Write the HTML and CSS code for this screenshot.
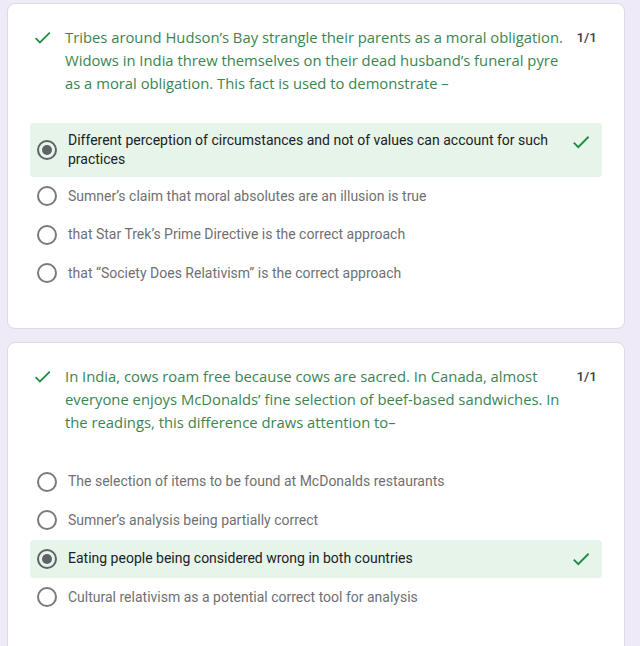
FILE: index.html
```html
<!DOCTYPE html>
<html>
<head>
<meta charset="utf-8">
<link rel="stylesheet" href="styles.css">
</head>
<body>
<div class="page">
  <section class="card card-first">
    <div class="question">
      <svg class="qcheck" viewBox="0 0 24 24"><path d="M9 16.17L4.83 12l-1.42 1.41L9 19 21 7l-1.41-1.41z"/></svg>
      <div class="qtext">Tribes around Hudson’s Bay strangle their parents as a moral obligation. Widows in India threw themselves on their dead husband’s funeral pyre as a moral obligation. This fact is used to demonstrate –</div>
      <div class="score">1/1</div>
    </div>
    <div class="options">
      <div class="option selected">
        <span class="radio checked"></span>
        <span class="otext">Different perception of circumstances and not of values can account for such practices</span>
        <svg class="ocheck" viewBox="0 0 24 24"><path d="M9 16.17L4.83 12l-1.42 1.41L9 19 21 7l-1.41-1.41z"/></svg>
      </div>
      <div class="option">
        <span class="radio"></span>
        <span class="otext">Sumner’s claim that moral absolutes are an illusion is true</span>
      </div>
      <div class="option">
        <span class="radio"></span>
        <span class="otext">that Star Trek’s Prime Directive is the correct approach</span>
      </div>
      <div class="option">
        <span class="radio"></span>
        <span class="otext">that “Society Does Relativism” is the correct approach</span>
      </div>
    </div>
  </section>
  <section class="card card-second">
    <div class="question">
      <svg class="qcheck" viewBox="0 0 24 24"><path d="M9 16.17L4.83 12l-1.42 1.41L9 19 21 7l-1.41-1.41z"/></svg>
      <div class="qtext">In India, cows roam free because cows are sacred. In Canada, almost everyone enjoys McDonalds’ fine selection of beef-based sandwiches. In the readings, this difference draws attention to–</div>
      <div class="score">1/1</div>
    </div>
    <div class="options">
      <div class="option">
        <span class="radio"></span>
        <span class="otext">The selection of items to be found at McDonalds restaurants</span>
      </div>
      <div class="option">
        <span class="radio"></span>
        <span class="otext">Sumner’s analysis being partially correct</span>
      </div>
      <div class="option selected">
        <span class="radio checked"></span>
        <span class="otext">Eating people being considered wrong in both countries</span>
        <svg class="ocheck" viewBox="0 0 24 24"><path d="M9 16.17L4.83 12l-1.42 1.41L9 19 21 7l-1.41-1.41z"/></svg>
      </div>
      <div class="option">
        <span class="radio"></span>
        <span class="otext">Cultural relativism as a potential correct tool for analysis</span>
      </div>
    </div>
  </section>
</div>
</body>
</html>
```

FILE: styles.css
```css
html, body {
  margin: 0;
  padding: 0;
  background: #eeeaf7;
  overflow: hidden;
}
.page {
  padding: 3px 15px 0 7px;
  display: flex;
  flex-direction: column;
  gap: 13px;
}
.card {
  background: #fff;
  border: 1px solid #dcdbe3;
  border-radius: 8px;
  padding: 0 22px;
}
.card-first {
  padding-top: 22px;
  padding-bottom: 35px;
}
.card-second {
  padding-top: 22px;
  padding-bottom: 60px;
}
.question {
  display: flex;
  align-items: flex-start;
  padding: 0 5px 0 2px;
}
.qcheck {
  width: 21px;
  height: 21px;
  fill: #1e8e3e;
  flex: none;
  margin: 1px 12px 0 0;
}
.qtext {
  flex: 1;
  font-family: "Open Sans", sans-serif;
  font-size: 14.8px;
  line-height: 23px;
  color: #3b8552;
}
.score {
  flex: none;
  font-family: Roboto, sans-serif;
  font-size: 13.5px;
  font-weight: 500;
  line-height: 23px;
  color: #3c4043;
  margin-left: 4px;
}
.options {
  margin-top: 28px;
  display: flex;
  flex-direction: column;
}
.card-second .options {
  margin-top: 29px;
}
.option {
  display: flex;
  align-items: center;
  min-height: 38.5px;
  box-sizing: border-box;
  padding: 8px 10px 8px 7px;
  border-radius: 4px;
}
.option.selected {
  background: #e6f4ea;
}
.radio {
  flex: none;
  width: 20px;
  height: 20px;
  box-sizing: border-box;
  border: 2px solid #7a7a7a;
  border-radius: 50%;
  margin-right: 11px;
  display: flex;
  align-items: center;
  justify-content: center;
}
.radio.checked {
  border-color: #5f6368;
}
.radio.checked::after {
  content: "";
  width: 10px;
  height: 10px;
  border-radius: 50%;
  background: #5f6368;
}
.otext {
  flex: 1;
  font-family: Roboto, sans-serif;
  font-size: 14px;
  line-height: 19px;
  color: #6f7073;
}
.selected .otext {
  color: #202124;
}
.ocheck {
  flex: none;
  width: 22px;
  height: 22px;
  fill: #1e8e3e;
  margin-left: 20px;
  align-self: flex-start;
}
```
